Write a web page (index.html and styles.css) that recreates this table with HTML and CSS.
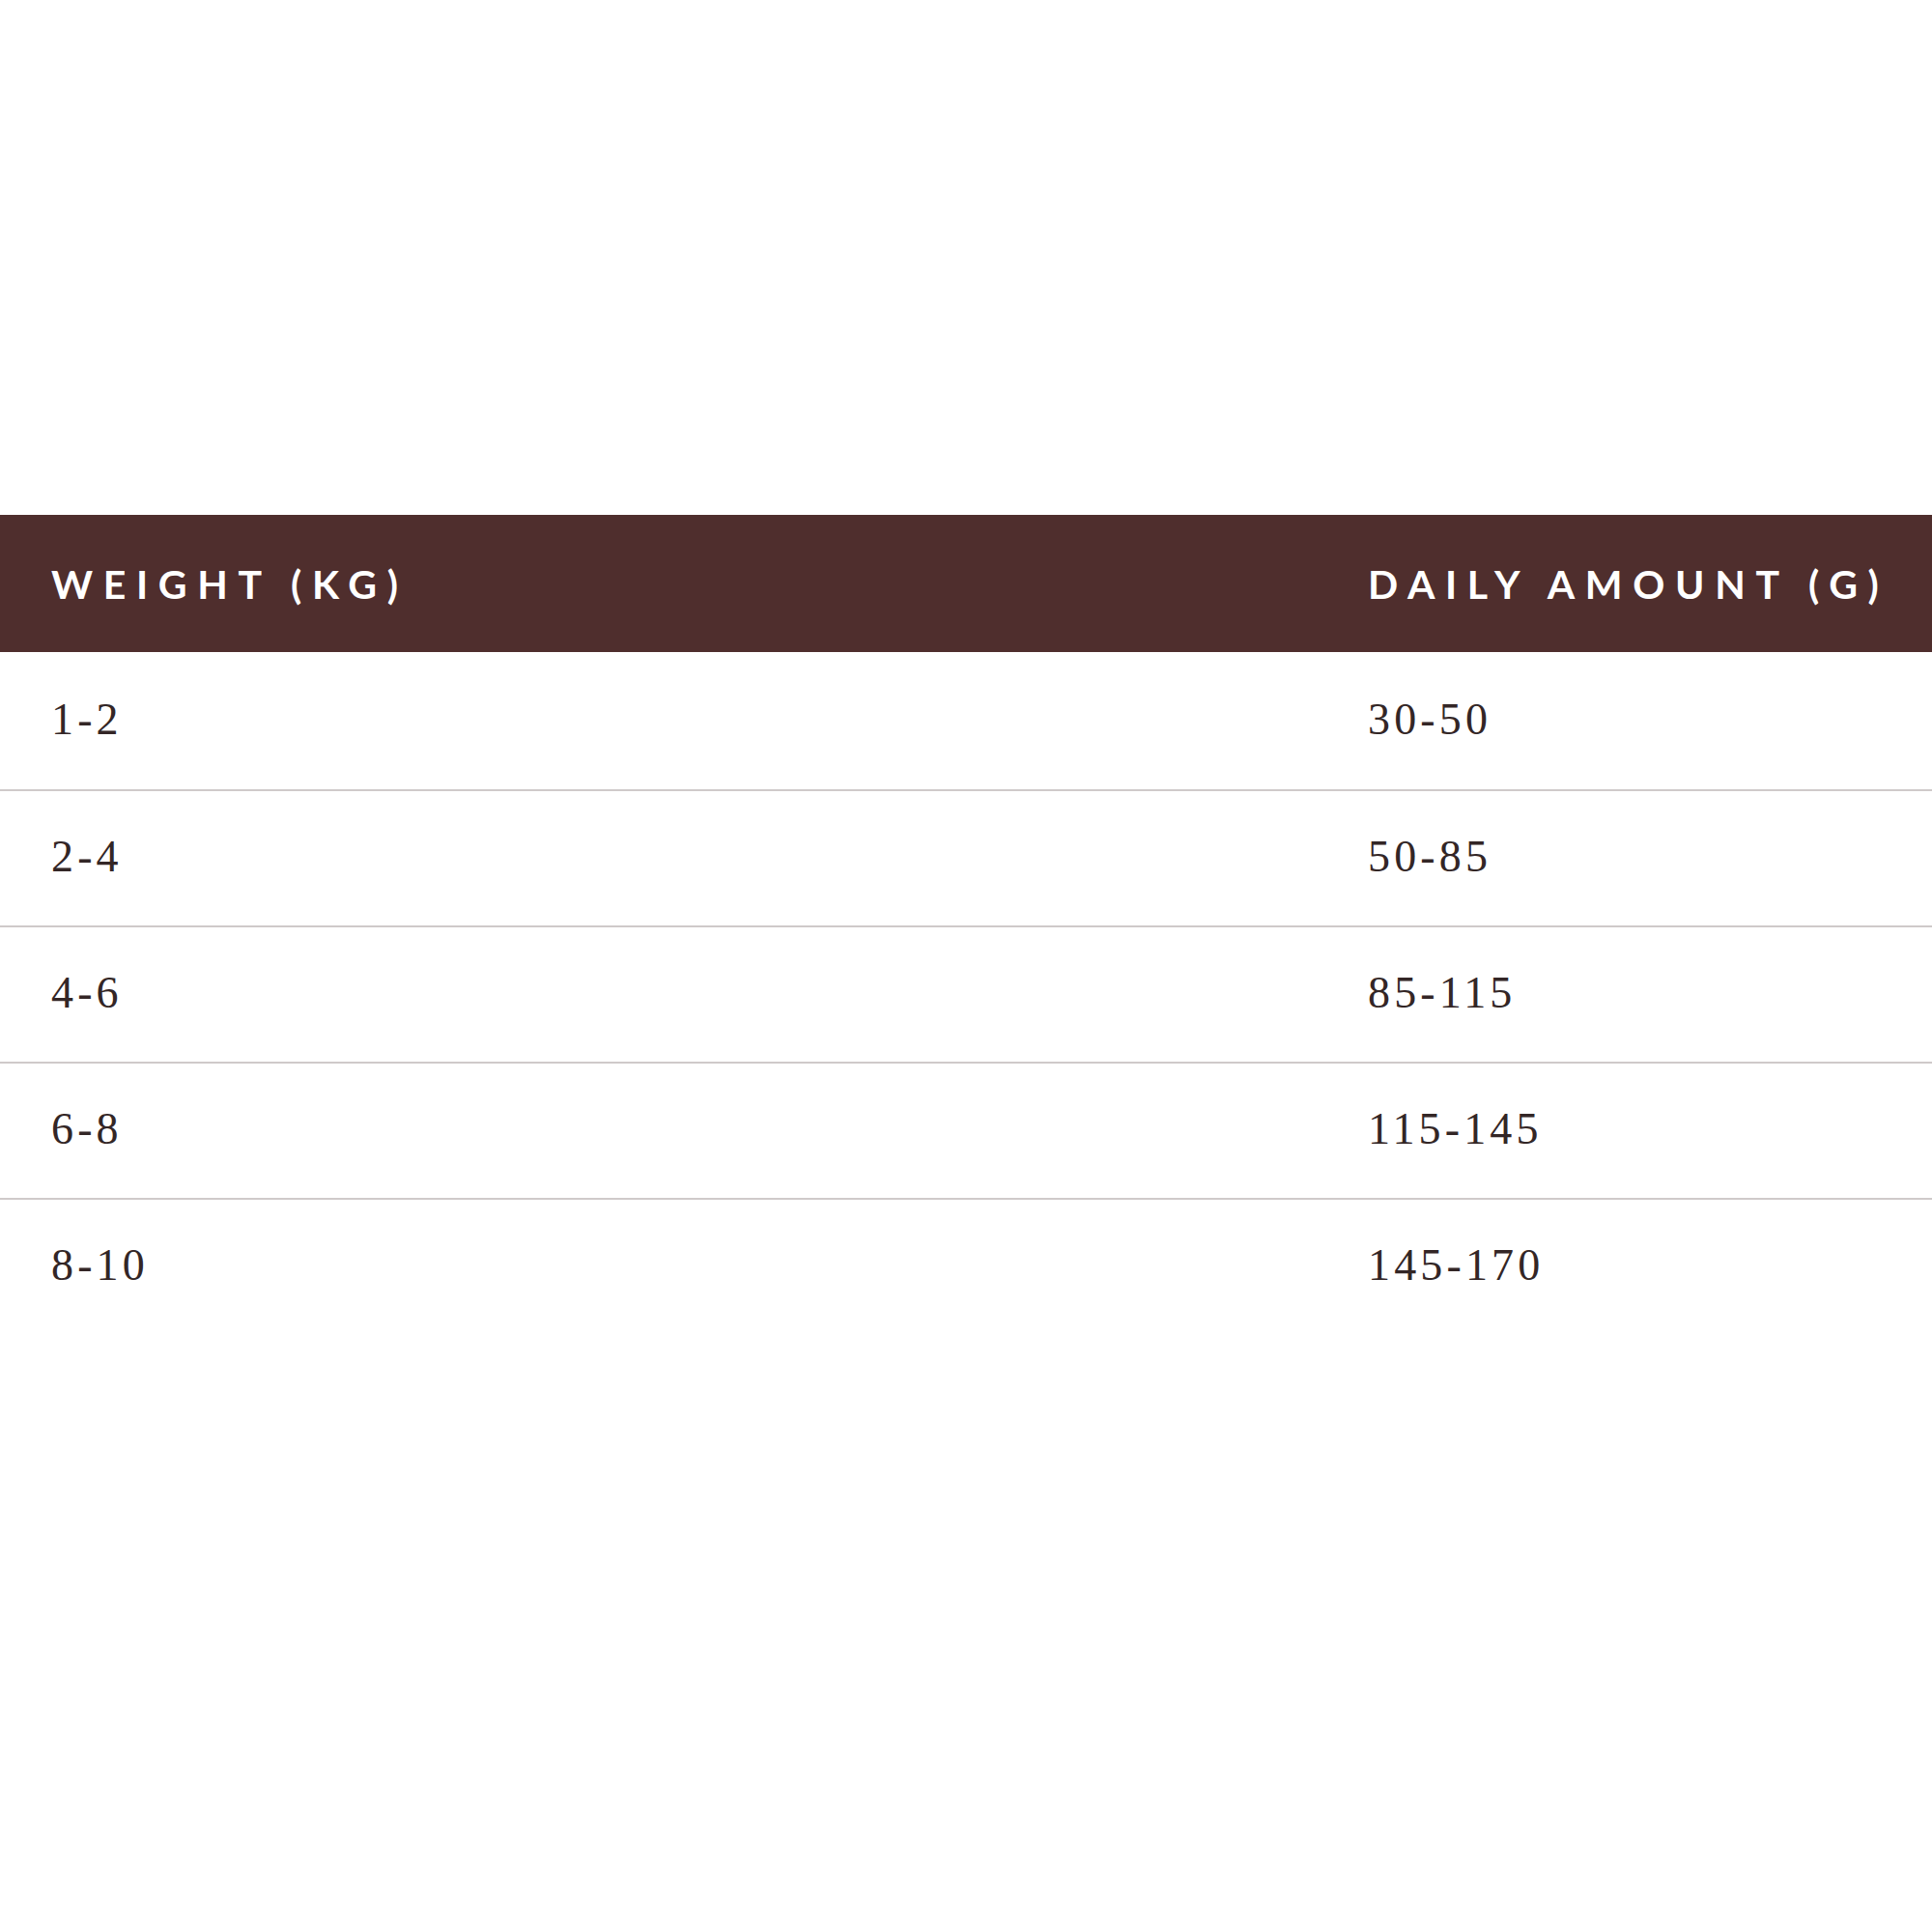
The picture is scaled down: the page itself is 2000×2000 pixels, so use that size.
FILE: index.html
```html
<!DOCTYPE html>
<html>
<head>
<meta charset="utf-8">
<link rel="stylesheet" href="styles.css">
</head>
<body>
<div class="page">
  <div class="table">
    <div class="row head">
      <div class="cell first">WEIGHT (KG)</div>
      <div class="cell">DAILY AMOUNT (G)</div>
    </div>
    <div class="row first-row">
      <div class="cell first">1-2</div>
      <div class="cell">30-50</div>
    </div>
    <div class="row">
      <div class="cell first">2-4</div>
      <div class="cell">50-85</div>
    </div>
    <div class="row">
      <div class="cell first">4-6</div>
      <div class="cell">85-115</div>
    </div>
    <div class="row">
      <div class="cell first">6-8</div>
      <div class="cell">115-145</div>
    </div>
    <div class="row">
      <div class="cell first">8-10</div>
      <div class="cell">145-170</div>
    </div>
  </div>
</div>
</body>
</html>
```

FILE: styles.css
```css
html, body {
  margin: 0;
  padding: 0;
  background: #ffffff;
}
.page {
  width: 2000px;
  height: 2000px;
  padding-top: 533px;
  box-sizing: border-box;
}
.table {
  display: flex;
  flex-direction: column;
}
.row {
  display: grid;
  grid-template-columns: 1416px 1fr;
  align-items: center;
  height: 141px;
  box-sizing: border-box;
  border-top: 2px solid #cfcaca;
  font-family: "Liberation Serif", "DejaVu Serif", serif;
  font-size: 46px;
  letter-spacing: 0.09em;
  color: #332626;
}
.row.first-row {
  border-top: none;
  height: 142px;
}
.row.head {
  border-top: none;
  height: 142px;
  background: #4f2e2d;
  color: #ffffff;
  font-family: "Lato", "DejaVu Sans", sans-serif;
  font-weight: 700;
  font-size: 41px;
  letter-spacing: 0.26em;
}
.cell {
  padding-bottom: 4px;
}
.row.head .cell {
  padding-bottom: 0;
}
.cell.first {
  padding-left: 53px;
}
```
